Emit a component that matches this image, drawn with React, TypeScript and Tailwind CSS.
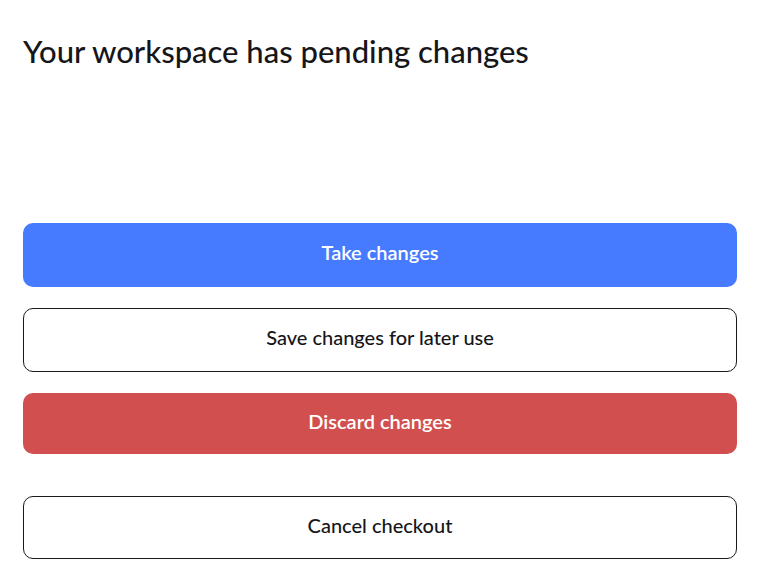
export default function App() {
  return (
    <div className="min-h-screen bg-white pl-[23px] pr-8 pt-[31px] font-['Lato',sans-serif] text-[#16161a]">
      <h1 className="text-[31px] font-medium leading-[40px]">Your workspace has pending changes</h1>
      <div className="mt-[152px] flex flex-col">
        <button
          type="button"
          className="h-16 rounded-[10px] bg-[#477bff] pb-[6px] text-[20px] font-semibold text-white"
        >
          Take changes
        </button>
        <button
          type="button"
          className="mt-[21px] h-16 rounded-[10px] border border-[#1a1a1a] bg-white pb-[6px] text-[20px] font-medium"
        >
          Save changes for later use
        </button>
        <button
          type="button"
          className="mt-[21px] h-[61px] rounded-[10px] bg-[#d14f4f] pb-[6px] text-[20px] font-semibold text-white"
        >
          Discard changes
        </button>
        <button
          type="button"
          className="mt-[42px] h-[63px] rounded-[10px] border border-[#1a1a1a] bg-white pb-[5px] text-[20px] font-medium"
        >
          Cancel checkout
        </button>
      </div>
    </div>
  )
}
